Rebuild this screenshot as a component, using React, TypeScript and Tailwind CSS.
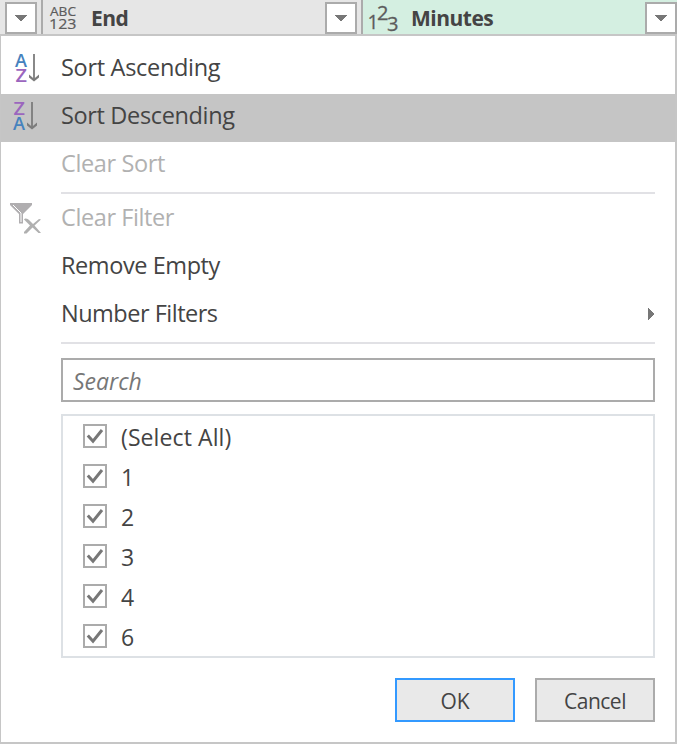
import React from "react";

function DropButton() {
  return (
    <button className="mt-[2px] flex h-8 w-8 shrink-0 items-center justify-center border-2 border-[#ababab] bg-white">
      <svg width="12" height="6" viewBox="0 0 12 6" shapeRendering="crispEdges">
        <path d="M0 0h12v1L6.6 6H5.4L0 1z" fill="#777" />
      </svg>
    </button>
  );
}

function SortIcon({ descending = false }: { descending?: boolean }) {
  return (
    <svg
      className={descending ? "ml-[12px] block overflow-visible" : "ml-[14px] block overflow-visible"}
      width="27"
      height="32"
      viewBox="0 0 27 32"
    >
      <g fontFamily="Open Sans, sans-serif" fontWeight="600" fontSize="18.500">
        {descending ? (
          <>
            <text x="0.500" y="13.200" fill="#9b66be" textLength="11.500" lengthAdjust="spacingAndGlyphs">Z</text>
            <text x="0" y="28.200" fill="#4682be" textLength="12" lengthAdjust="spacingAndGlyphs">A</text>
          </>
        ) : (
          <>
            <text x="0" y="13.200" fill="#4682be" textLength="12" lengthAdjust="spacingAndGlyphs">A</text>
            <text x="0.500" y="28.200" fill="#9b66be" textLength="11.500" lengthAdjust="spacingAndGlyphs">Z</text>
          </>
        )}
      </g>
      <path d="M19 0v26" stroke="#7c7c7c" strokeWidth="1.800" fill="none" />
      <path d="M14 20.500v3l5 4 5-4v-3l-5 4.2z" fill="#7c7c7c" />
    </svg>
  );
}

function ClearFilterIcon() {
  return (
    <svg className="ml-[9px] block" width="32" height="32" viewBox="0 0 32 32">
      <path d="M0 0h22v2l-9 9v9.500H9V11L0 2z" fill="#b0aeb0" />
      <path d="M3 2l8 8v9" fill="none" stroke="#fff" strokeWidth="1" />
      <path d="M14 16.500c1-2 4-1 5 .5l4 4 6-5 2 .5-6.500 6L31 30h-2.500l-6-5.500-6 6h-2.500v-1.500l6-6.500-4-4z" fill="#b0b0b0" />
    </svg>
  );
}

function MenuItem({
  label,
  icon,
  tracking,
  offset = "pb-[4px]",
  selected = false,
  disabled = false,
  submenu = false,
}: {
  label: string;
  icon?: React.ReactNode;
  tracking: string;
  offset?: string;
  selected?: boolean;
  disabled?: boolean;
  submenu?: boolean;
}) {
  return (
    <div
      className={`flex h-12 shrink-0 items-center ${selected ? "bg-[#c5c5c5]" : ""} ${
        disabled ? "text-[#b1b1b1]" : "text-[#444]"
      }`}
    >
      <div className="w-[60px] shrink-0">{icon}</div>
      <span className={`text-[23.500px] leading-8 whitespace-nowrap ${offset} ${tracking}`}>{label}</span>
      {submenu && (
        <svg className="mr-[21px] mb-[3px] ml-auto block" width="6" height="12" viewBox="0 0 6 12" shapeRendering="crispEdges">
          <path d="M0 0h1l5 5.500v1L1 12H0z" fill="#777" />
        </svg>
      )}
    </div>
  );
}

function CheckRow({ label, tracking = "" }: { label: string; tracking?: string }) {
  return (
    <label className="flex h-10 items-center">
      <span className="ml-5 flex h-6 w-6 shrink-0 items-center justify-center border-2 border-[#ababab] bg-white">
        <svg width="20" height="20" viewBox="0 0 20 20">
          <path d="M2.800 9.500l5.200 5.700L17 4" fill="none" stroke="#777" strokeWidth="3" />
        </svg>
      </span>
      <span className={`ml-[14px] pt-[2px] text-[23px] leading-8 whitespace-nowrap ${tracking}`}>{label}</span>
    </label>
  );
}

export default function App() {
  return (
    <div className="flex h-[744px] w-[677px] flex-col overflow-hidden bg-white font-['Open_Sans','Noto_Sans',sans-serif] text-[#444]">
      <header className="flex h-[34px] shrink-0 bg-[#e6e6e6]">
        <div className="flex w-[43px] shrink-0 border-r-2 border-[#ababab] pl-[5px]">
          <DropButton />
        </div>
        <div className="flex w-[320px] shrink-0 border-r-2 border-[#ababab] pr-1">
          <svg className="ml-[7px] block overflow-visible" width="28" height="34" viewBox="0 0 28 34">
            <g fontFamily="Open Sans, sans-serif" fill="#5c5c5c" stroke="#5c5c5c" strokeWidth="0.200">
              <text x="0" y="16" fontSize="12.500" textLength="26" lengthAdjust="spacingAndGlyphs">ABC</text>
              <text x="-1" y="29" fontSize="15" textLength="27.500" lengthAdjust="spacingAndGlyphs">123</text>
            </g>
          </svg>
          <span className="ml-[13px] text-[21px] leading-[36px] font-bold tracking-[-0.5px]">End</span>
          <div className="ml-auto">
            <DropButton />
          </div>
        </div>
        <div className="flex grow bg-[#d4efe1]">
          <svg className="ml-[5px] block overflow-visible" width="31" height="34" viewBox="0 0 31 34">
            <g fontFamily="Open Sans, sans-serif" fill="#5c5c5c" stroke="#5c5c5c" strokeWidth="0.300" fontSize="20.500">
              <text x="-0.500" y="29" textLength="11" lengthAdjust="spacingAndGlyphs">1</text>
              <text x="9" y="20" textLength="11.500" lengthAdjust="spacingAndGlyphs">2</text>
              <text x="19" y="30.500" textLength="11.500" lengthAdjust="spacingAndGlyphs">3</text>
            </g>
          </svg>
          <span className="ml-[12px] text-[21px] leading-[36px] font-bold tracking-[-0.5px]">Minutes</span>
          <div className="ml-auto">
            <DropButton />
          </div>
        </div>
      </header>

      <main className="flex grow flex-col border-t-2 border-r-2 border-b-2 border-l border-[#c6c6c6] pt-[10px]">
        <MenuItem label="Sort Ascending" icon={<SortIcon />} tracking="tracking-[-0.3px]" offset="pb-[6px]" />
        <MenuItem label="Sort Descending" icon={<SortIcon descending />} tracking="tracking-[-0.35px]" offset="pb-[6px]" selected />
        <MenuItem label="Clear Sort" tracking="tracking-[-0.38px]" offset="pb-[6px]" disabled />
        <hr className="mt-[2px] mr-5 mb-px ml-[60px] border-t-2 border-[#e1e1e5]" />
        <MenuItem label="Clear Filter" icon={<ClearFilterIcon />} tracking="tracking-[-0.4px]" disabled />
        <MenuItem label="Remove Empty" tracking="tracking-[-0.42px]" />
        <MenuItem label="Number Filters" tracking="tracking-[-0.5px]" submenu />
        <hr className="mt-[3px] mr-5 ml-[60px] border-t-2 border-[#e1e1e5]" />

        <div className="mt-[14px] mr-5 ml-[60px] flex h-11 shrink-0 items-center border-2 border-[#ababab] pl-[10px]">
          <span className="pt-[2px] text-[23px] leading-8 text-[#777] italic">Search</span>
        </div>

        <div className="mt-3 mr-5 ml-[60px] h-[244px] shrink-0 overflow-hidden border-2 border-[#dde1e5]">
          <CheckRow label="(Select All)" tracking="tracking-[0.1px]" />
          <CheckRow label="1" />
          <CheckRow label="2" />
          <CheckRow label="3" />
          <CheckRow label="4" />
          <CheckRow label="6" />
        </div>

        <div className="mt-5 mr-5 flex justify-end gap-5">
          <button className="h-11 w-[120px] border-2 border-[#3399ff] bg-[#e9e9e9] pt-[3px] text-[21px]">OK</button>
          <button className="h-11 w-[120px] border-2 border-[#ababab] bg-[#e9e9e9] pt-[3px] text-[21px] tracking-[-0.5px]">Cancel</button>
        </div>
      </main>
    </div>
  );
}
